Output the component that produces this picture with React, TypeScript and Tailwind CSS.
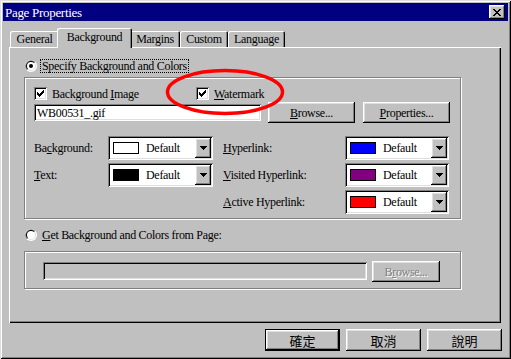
import React from "react";

const raised =
  "shadow-[inset_-1px_-1px_0_#000,inset_1px_1px_0_#fff,inset_-2px_-2px_0_#808080,inset_2px_2px_0_#dfdfdf]";
const sunken =
  "shadow-[inset_1px_1px_0_#808080,inset_-1px_-1px_0_#fff,inset_2px_2px_0_#000,inset_-2px_-2px_0_#dfdfdf]";
const etched = "border border-[#808080] shadow-[inset_1px_1px_0_#fff,1px_1px_0_#fff]";

function Check() {
  return (
    <div className={`relative w-[13px] h-[13px] shrink-0 bg-white ${sunken}`}>
      <svg className="absolute left-0 top-0" width="13" height="13" viewBox="0 0 13 13" shapeRendering="crispEdges">
        <polygon points="3,5 5,7 10,2 10,5 5,10 3,8" fill="#000" />
      </svg>
    </div>
  );
}

function Radio({ on }: { on?: boolean }) {
  return (
    <svg width="12" height="12" viewBox="0 0 12 12" className="shrink-0">
      <circle cx="6" cy="6" r="6" fill="#fff" />
      <path d="M1.76 10.24 A6 6 0 0 1 10.24 1.76 Z" fill="#808080" />
      <circle cx="6" cy="6" r="5" fill="#dfdfdf" />
      <path d="M2.46 9.54 A5 5 0 0 1 9.54 2.46 Z" fill="#000" />
      <circle cx="6" cy="6" r="4" fill="#fff" />
      {on && <circle cx="6" cy="6" r="2" fill="#000" />}
    </svg>
  );
}

function Tab({ w, sel, children }: { w: string; sel?: boolean; children: React.ReactNode }) {
  if (sel) {
    return (
      <div
        className={`${w} h-[20px] -mb-[1px] -ml-[2px] -mr-[2px] relative z-10 bg-[#c0c0c0] rounded-t-[2px] flex items-start justify-center pt-[3px] shadow-[inset_1px_1px_0_#fff,inset_-1px_0_0_#000,inset_-2px_0_0_#808080]`}
      >
        {children}
      </div>
    );
  }
  return (
    <div
      className={`${w} h-[16px] rounded-t-[2px] flex items-start justify-center pt-[2px] shadow-[inset_1px_1px_0_#fff,inset_-1px_0_0_#000,inset_-2px_0_0_#808080]`}
    >
      {children}
    </div>
  );
}

function Dropdown({ w, color }: { w: string; color: string }) {
  return (
    <div className={`${w} h-[24px] bg-white ${sunken} flex items-stretch p-[2px]`}>
      <div className="flex-1 flex items-center pl-[3px]">
        <div className="w-[26px] h-[12px] border border-black" style={{ background: color }} />
        <span className="ml-[7px]">Default</span>
      </div>
      <div className={`w-[16px] bg-[#c0c0c0] ${raised} flex items-center justify-center`}>
        <svg width="7" height="4" viewBox="0 0 7 4" shapeRendering="crispEdges">
          <polygon points="0,0 7,0 3.5,4" fill="#000" />
        </svg>
      </div>
    </div>
  );
}

function Btn({ w, children, def, h = "h-[21px]" }: { w: string; children: React.ReactNode; def?: boolean; h?: string }) {
  if (def) {
    return (
      <div className={`${w} ${h} border border-black`}>
        <div className={`w-full h-full ${raised} flex items-center justify-center`}>{children}</div>
      </div>
    );
  }
  return <div className={`${w} ${h} ${raised} flex items-center justify-center`}>{children}</div>;
}

export default function App() {
  return (
    <div className="relative w-[511px] h-[359px] bg-[#c0c0c0] p-[3px] flex flex-col font-['Liberation_Serif',serif] text-[12px] tracking-[-0.3px] text-black leading-none shadow-[inset_1px_1px_0_#dfdfdf,inset_-1px_-1px_0_#000,inset_2px_2px_0_#fff,inset_-2px_-2px_0_#808080]">
      {/* Title bar */}
      <div className="h-[18px] shrink-0 bg-[#000080] flex items-center justify-between pl-[2px] pr-[3px]">
        <span className="text-white text-[13px]">Page Properties</span>
        <div className={`w-[16px] h-[14px] bg-[#c0c0c0] ${raised} flex items-center justify-center`}>
          <svg width="8" height="7" viewBox="0 0 8 7" shapeRendering="crispEdges">
            <path d="M0 0h2v1h1v1h2V1h1V0h2v1H7v1H6v1H5v1h1v1h1v1h1v1H6V6H5V5H3v1H2v1H0V6h1V5h1V4h1V3H2V2H1V1H0z" fill="#000" />
          </svg>
        </div>
      </div>

      {/* Tabs */}
      <div className="relative z-10 flex items-end mt-[7px] ml-[7px] h-[19px] shrink-0">
        <Tab w="w-[49px]">General</Tab>
        <Tab w="w-[75px]" sel>
          Background
        </Tab>
        <Tab w="w-[50px]">Margins</Tab>
        <Tab w="w-[48px]">Custom</Tab>
        <Tab w="w-[57px]">Language</Tab>
      </div>

      {/* Panel */}
      <div className="ml-[6px] w-[492px] h-[276px] shrink-0 flex flex-col shadow-[inset_1px_1px_0_#fff,inset_-1px_-1px_0_#000,inset_-2px_-2px_0_#808080]">
        <div className="mt-[12px] ml-[16px] h-[14px] flex items-center">
          <Radio on />
          <span className="ml-[3px] h-[14px] flex items-center px-[1px] border border-dotted border-black">
            Specify Background and Colors
          </span>
        </div>

        {/* Group 1 */}
        <div className={`mt-[4px] ml-[15px] w-[437px] h-[142px] ${etched} flex flex-col`}>
          <div className="mt-[9px] ml-[9px] h-[13px] flex items-center">
            <div className="w-[162px] flex items-center">
              <Check />
              <span className="ml-[5px]">
                Background <u>I</u>mage
              </span>
            </div>
            <Check />
            <span className="ml-[5px]">
              <u>W</u>atermark
            </span>
          </div>
          <div className="mt-[2px] ml-[9px] h-[21px] flex items-center">
            <div className={`w-[227px] h-[17px] bg-white ${sunken} flex items-center pl-[3px]`}>WB00531_.gif</div>
            <div className="ml-[7px]">
              <Btn w="w-[87px]">
                <span>
                  <u>B</u>rowse...
                </span>
              </Btn>
            </div>
            <div className="ml-[8px]">
              <Btn w="w-[87px]">
                <span>
                  <u>P</u>roperties...
                </span>
              </Btn>
            </div>
          </div>
          <div className="mt-[13px] flex">
            <div className="ml-[9px] w-[179px] flex flex-col gap-[3px]">
              <div className="flex items-center">
                <span className="w-[74px]">
                  Ba<u>c</u>kground:
                </span>
                <Dropdown w="w-[105px]" color="#ffffff" />
              </div>
              <div className="flex items-center">
                <span className="w-[74px]">
                  <u>T</u>ext:
                </span>
                <Dropdown w="w-[105px]" color="#000000" />
              </div>
            </div>
            <div className="ml-[10px] flex flex-col gap-[3px]">
              <div className="flex items-center">
                <span className="w-[122px]">
                  <u>H</u>yperlink:
                </span>
                <Dropdown w="w-[104px]" color="#0000ff" />
              </div>
              <div className="flex items-center">
                <span className="w-[122px]">
                  <u>V</u>isited Hyperlink:
                </span>
                <Dropdown w="w-[104px]" color="#800080" />
              </div>
              <div className="flex items-center">
                <span className="w-[122px]">
                  <u>A</u>ctive Hyperlink:
                </span>
                <Dropdown w="w-[104px]" color="#ff0000" />
              </div>
            </div>
          </div>
        </div>

        <div className="mt-[9px] ml-[16px] h-[14px] flex items-center">
          <Radio />
          <span className="ml-[5px]">
            <u>G</u>et Background and Colors from Page:
          </span>
        </div>

        {/* Group 2 */}
        <div className={`mt-[9px] ml-[15px] w-[437px] h-[38px] ${etched} flex items-start`}>
          <div className={`mt-[10px] ml-[18px] w-[324px] h-[18px] ${sunken}`} />
          <div className="mt-[9px] ml-[5px]">
            <Btn w="w-[68px]">
              <span className="text-[#808080] [text-shadow:1px_1px_0_#fff]">
                B<u>r</u>owse...
              </span>
            </Btn>
          </div>
        </div>
      </div>

      {/* Bottom buttons */}
      <div className="mt-[6px] pr-[6px] flex justify-end gap-[6px] font-['Noto_Sans_CJK_TC','Noto_Sans_CJK_SC',sans-serif] text-[13px] tracking-normal">
        <Btn w="w-[75px]" h="h-[22px]" def>
          確定
        </Btn>
        <Btn w="w-[75px]" h="h-[22px]">
          取消
        </Btn>
        <Btn w="w-[75px]" h="h-[22px]">
          說明
        </Btn>
      </div>

      {/* Red annotation ellipse */}
      <svg className="absolute left-[165px] top-[68px] pointer-events-none" width="121" height="48" viewBox="0 0 121 48">
        <ellipse cx="60" cy="24" rx="57.5" ry="21.5" fill="none" stroke="#f00" strokeWidth="3.5" />
      </svg>
    </div>
  );
}
